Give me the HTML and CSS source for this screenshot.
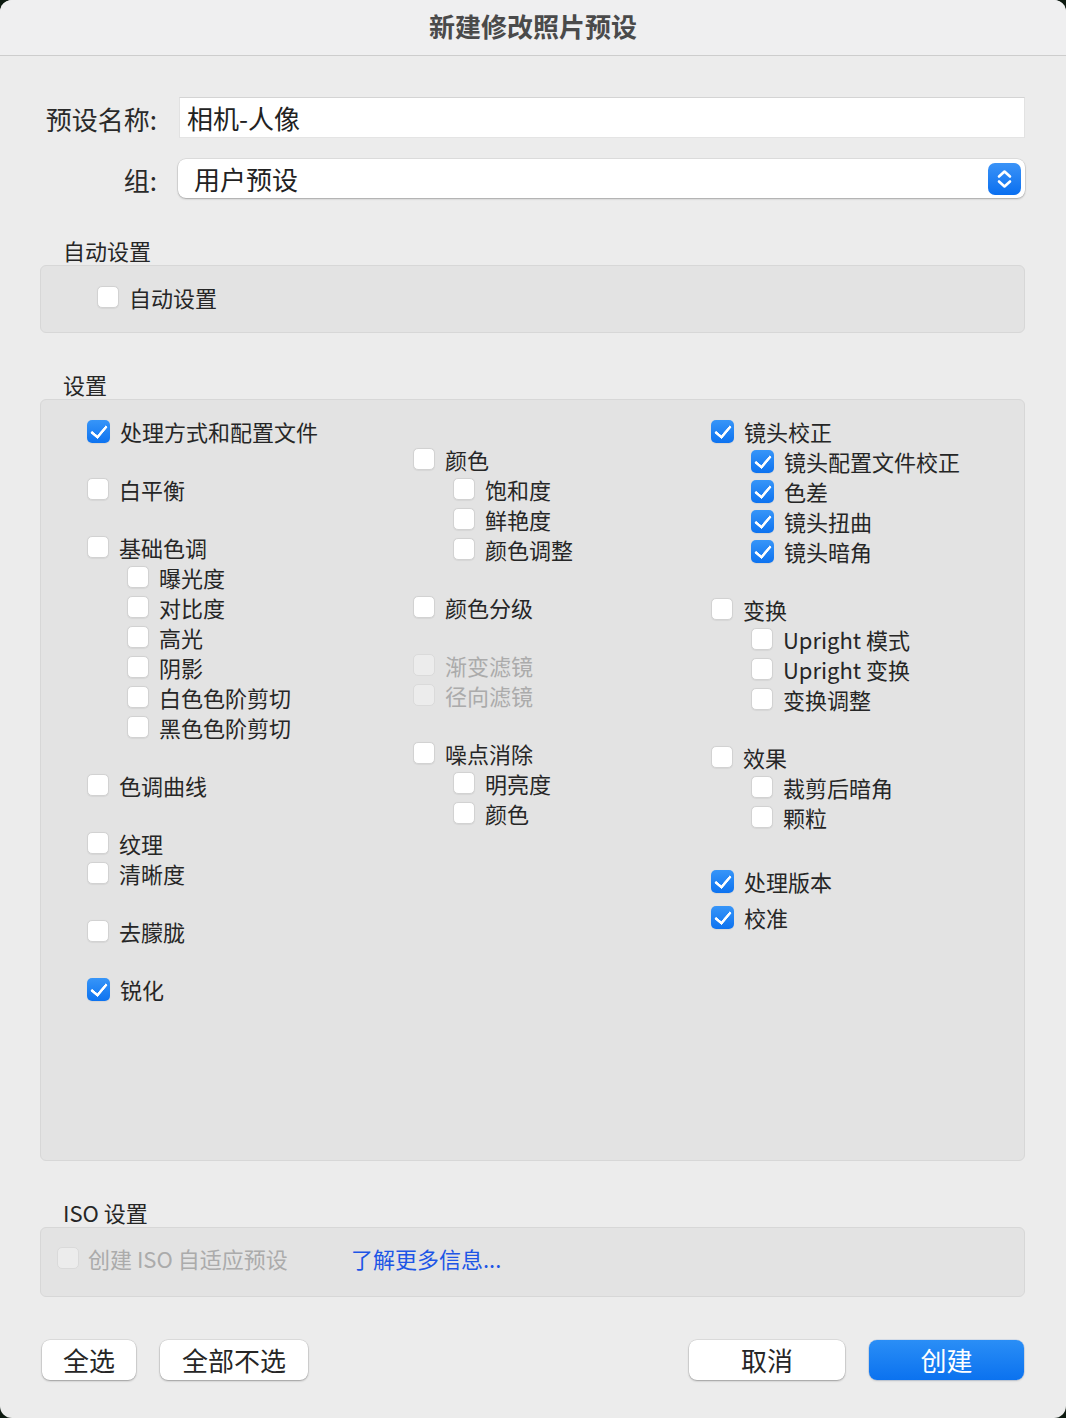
FILE: index.html
```html
<!DOCTYPE html>
<html lang="zh-CN">
<head>
<meta charset="utf-8">
<title>新建修改照片预设</title>
<link rel="stylesheet" href="styles.css">
</head>
<body>
<div class="dialog">
  <div class="titlebar">新建修改照片预设</div>
  <div class="content">
    <div class="form">
      <label class="flabel">预设名称:</label>
      <div class="textfield">相机-人像</div>
      <label class="flabel">组:</label>
      <div class="select">
        <span>用户预设</span>
        <svg class="stepper" width="33" height="32" viewBox="0 0 33 32">
          <defs><linearGradient id="sg" x1="0" y1="0" x2="0" y2="1"><stop offset="0" stop-color="#3b93f7"/><stop offset="1" stop-color="#0a6ff0"/></linearGradient></defs>
          <rect x="0" y="0" width="33" height="32" rx="7" fill="url(#sg)"/>
          <path d="M11 13.5 L16.5 8.5 L22 13.5" fill="none" stroke="#fff" stroke-width="2.6" stroke-linecap="round" stroke-linejoin="round"/>
          <path d="M11 18.5 L16.5 23.5 L22 18.5" fill="none" stroke="#fff" stroke-width="2.6" stroke-linecap="round" stroke-linejoin="round"/>
        </svg>
      </div>
    </div>

    <div class="seclabel first">自动设置</div>
    <div class="box autobox">
      <div class="item"><span class="cb"></span><span>自动设置</span></div>
    </div>

    <div class="seclabel">设置</div>
    <div class="box setbox">
      <div class="col">
        <div class="item"><span class="cb on"></span><span>处理方式和配置文件</span></div>
        <div class="item gap"><span class="cb"></span><span>白平衡</span></div>
        <div class="item gap"><span class="cb"></span><span>基础色调</span></div>
        <div class="item sub"><span class="cb"></span><span>曝光度</span></div>
        <div class="item sub"><span class="cb"></span><span>对比度</span></div>
        <div class="item sub"><span class="cb"></span><span>高光</span></div>
        <div class="item sub"><span class="cb"></span><span>阴影</span></div>
        <div class="item sub"><span class="cb"></span><span>白色色阶剪切</span></div>
        <div class="item sub"><span class="cb"></span><span>黑色色阶剪切</span></div>
        <div class="item gap"><span class="cb"></span><span>色调曲线</span></div>
        <div class="item gap"><span class="cb"></span><span>纹理</span></div>
        <div class="item"><span class="cb"></span><span>清晰度</span></div>
        <div class="item gap"><span class="cb"></span><span>去朦胧</span></div>
        <div class="item gap"><span class="cb on"></span><span>锐化</span></div>
      </div>
      <div class="col">
        <div class="item gap"><span class="cb"></span><span>颜色</span></div>
        <div class="item sub"><span class="cb"></span><span>饱和度</span></div>
        <div class="item sub"><span class="cb"></span><span>鲜艳度</span></div>
        <div class="item sub"><span class="cb"></span><span>颜色调整</span></div>
        <div class="item gap"><span class="cb"></span><span>颜色分级</span></div>
        <div class="item gap disabled"><span class="cb dis"></span><span>渐变滤镜</span></div>
        <div class="item disabled"><span class="cb dis"></span><span>径向滤镜</span></div>
        <div class="item gap"><span class="cb"></span><span>噪点消除</span></div>
        <div class="item sub"><span class="cb"></span><span>明亮度</span></div>
        <div class="item sub"><span class="cb"></span><span>颜色</span></div>
      </div>
      <div class="col">
        <div class="item"><span class="cb on"></span><span>镜头校正</span></div>
        <div class="item sub"><span class="cb on"></span><span>镜头配置文件校正</span></div>
        <div class="item sub"><span class="cb on"></span><span>色差</span></div>
        <div class="item sub"><span class="cb on"></span><span>镜头扭曲</span></div>
        <div class="item sub"><span class="cb on"></span><span>镜头暗角</span></div>
        <div class="item gap"><span class="cb"></span><span>变换</span></div>
        <div class="item sub"><span class="cb"></span><span>Upright 模式</span></div>
        <div class="item sub"><span class="cb"></span><span>Upright 变换</span></div>
        <div class="item sub"><span class="cb"></span><span>变换调整</span></div>
        <div class="item gap"><span class="cb"></span><span>效果</span></div>
        <div class="item sub"><span class="cb"></span><span>裁剪后暗角</span></div>
        <div class="item sub"><span class="cb"></span><span>颗粒</span></div>
        <div class="item gap-l"><span class="cb on"></span><span>处理版本</span></div>
        <div class="item gap-s"><span class="cb on"></span><span>校准</span></div>
      </div>
    </div>

    <div class="seclabel">ISO 设置</div>
    <div class="box isobox">
      <div class="item disabled iso-item"><span class="cb dis"></span><span>创建 ISO 自适应预设</span></div>
      <a class="link">了解更多信息...</a>
    </div>

    <div class="buttons">
      <div class="btngroup">
        <button class="btn w94">全选</button>
        <button class="btn w148">全部不选</button>
      </div>
      <div class="btngroup">
        <button class="btn w156">取消</button>
        <button class="btn primary w155">创建</button>
      </div>
    </div>
  </div>
</div>
</body>
</html>
```

FILE: styles.css
```css
html, body {
  margin: 0;
  padding: 0;
  background: #0d1a10;
}
body {
  font-family: "Noto Sans CJK SC", "Noto Sans", sans-serif;
  color: #262626;
}
.dialog {
  width: 1066px;
  height: 1418px;
  background: #ececec;
  border-radius: 12px;
  overflow: hidden;
  box-sizing: border-box;
}
.titlebar {
  height: 56px;
  box-sizing: border-box;
  border-bottom: 1px solid #cdcdcd;
  background: #efeff0;
  display: flex;
  align-items: center;
  justify-content: center;
  font-size: 26px;
  font-weight: 600;
  color: #4a4a4a;
  padding-bottom: 4px;
}
.content {
  padding: 0 41px 0 40px;
}
.form {
  display: grid;
  grid-template-columns: 117px 1fr;
  grid-template-rows: 41px 39px;
  column-gap: 22px;
  row-gap: 21px;
  padding-top: 41px;
  align-items: center;
}
.flabel {
  text-align: right;
  font-size: 26px;
  color: #2a2a2a;
  line-height: 39px;
  padding-top: 2px;
}
.textfield {
  height: 41px;
  box-sizing: border-box;
  background: #fff;
  border-top: 1px solid #d4d4d4;
  border-bottom: 1px solid #e4e4e4;
  border-left: 1px solid #e2e2e2;
  border-right: 1px solid #e2e2e2;
  font-size: 26px;
  line-height: 39px;
  padding-left: 7px;
  color: #222;
}
.select {
  height: 39px;
  margin-left: -1px;
  box-sizing: border-box;
  background: #fff;
  border-radius: 8px;
  box-shadow: 0 0 0 0.5px rgba(0,0,0,0.12), 0 1px 2px rgba(0,0,0,0.25);
  display: flex;
  align-items: center;
  justify-content: space-between;
  padding: 0 4px 0 16px;
  font-size: 26px;
  color: #222;
}
.stepper {
  display: block;
}
.seclabel {
  font-size: 22px;
  line-height: 30px;
  padding-left: 23px;
  margin-top: 36px;
  color: #262626;
}
.seclabel.first {
  margin-top: 37px;
}
.box {
  background: #e3e3e3;
  border: 1px solid #d7d7d7;
  border-radius: 6px;
  box-sizing: border-box;
}
.autobox {
  height: 68px;
  padding: 16px 0 0 56px;
}
.setbox {
  height: 762px;
  padding: 16px 0 0 46px;
  display: grid;
  grid-template-columns: 326px 298px 1fr;
}
.col {
  display: flex;
  flex-direction: column;
}
.item {
  display: flex;
  align-items: center;
  height: 30px;
  font-size: 22px;
  color: #262626;
  white-space: nowrap;
}
.item .cb {
  margin-right: 10px;
}
.item.sub {
  margin-left: 40px;
}
.item.gap {
  margin-top: 28px;
}
.item.gap-l {
  margin-top: 34px;
}
.item.gap-s {
  margin-top: 6px;
}
.item.disabled {
  color: #ababab;
}
.cb {
  width: 22px;
  height: 22px;
  box-sizing: border-box;
  border-radius: 5px;
  background: #fff;
  border: 1px solid #d2d2d2;
  box-shadow: 0 0.5px 1px rgba(0,0,0,0.06);
  flex: none;
  position: relative;
}
.cb.on {
  width: 23px;
  height: 23px;
  border: none;
  background: linear-gradient(#3795f8, #0d73f0);
}
.cb.on::after {
  content: "";
  position: absolute;
  left: 7px;
  top: 2px;
  width: 7px;
  height: 13px;
  border-right: 3.5px solid #fff;
  border-bottom: 3.5px solid #fff;
  transform: rotate(40deg);
  border-radius: 1px;
}
.cb.dis {
  background: #ececec;
  border-color: #dadada;
  box-shadow: none;
}
.isobox {
  height: 70px;
  padding: 0 0 8px 16px;
  display: flex;
  align-items: center;
}
.iso-item {
  width: 294px;
}
.iso-item .cb {
  margin-right: 9px;
}
.link {
  font-size: 22px;
  color: #1d55e6;
}
.buttons {
  margin-top: 43px;
  display: flex;
  justify-content: space-between;
  padding-left: 2px;
  padding-right: 1px;
}
.btngroup {
  display: flex;
  gap: 24px;
}
.btn {
  height: 40px;
  border: none;
  border-radius: 8px;
  background: #fff;
  box-shadow: 0 0 0 0.5px rgba(0,0,0,0.12), 0 1px 2px rgba(0,0,0,0.3);
  font-family: "Noto Sans CJK SC", "Noto Sans", sans-serif;
  font-size: 26px;
  color: #262626;
  padding: 0;
  line-height: 38px;
}
.btn.primary {
  background: linear-gradient(#2a8ef6, #0b72ef);
  color: #fff;
  box-shadow: 0 0 0 0.5px rgba(0,80,200,0.2), 0 1px 2px rgba(0,0,0,0.15);
}
.w94 { width: 94px; }
.w148 { width: 148px; }
.w156 { width: 156px; }
.w155 { width: 155px; }
```
